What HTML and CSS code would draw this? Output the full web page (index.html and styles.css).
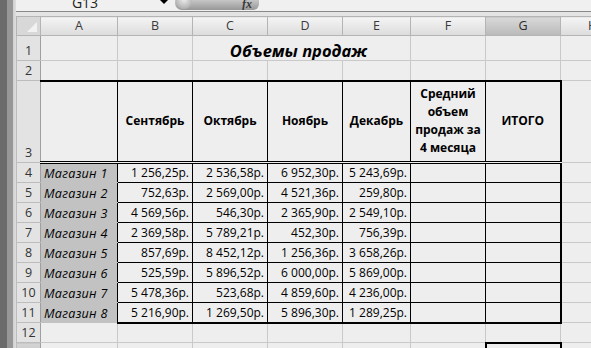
FILE: index.html
```html
<!DOCTYPE html>
<html lang="ru">
<head>
<meta charset="utf-8">
<title>Объемы продаж</title>
<link rel="stylesheet" href="styles.css">
</head>
<body>
<div class="app">
  <div class="sidebar"></div>
  <div class="main">
    <div class="formula-bar">
      <div class="name-box"><span class="name-text">G13</span></div>
      <div class="dropdown"></div>
      <div class="fx-pill"><span class="fx-knob"></span><span class="fx">fx</span></div>
      <div class="formula-input"></div>
    </div>
    <div class="sheet-wrap">
      <table class="sheet">
        <colgroup>
          <col class="w-hdr"><col class="w-a"><col class="w-b"><col class="w-c"><col class="w-d"><col class="w-e"><col class="w-f"><col class="w-g"><col class="w-h">
        </colgroup>
        <thead>
          <tr class="h-col">
            <th class="corner"><span class="corner-tri"></span></th>
            <th class="colh">A</th><th class="colh">B</th><th class="colh">C</th><th class="colh">D</th><th class="colh">E</th><th class="colh">F</th><th class="colh sel">G</th><th class="colh">H</th>
          </tr>
        </thead>
        <tbody>
          <tr class="h-r1">
            <th class="rowh">1</th><td></td><td></td><td colspan="3" class="title">Объемы продаж</td><td></td><td></td><td></td>
          </tr>
          <tr class="h-20">
            <th class="rowh">2</th><td></td><td></td><td></td><td></td><td></td><td></td><td></td><td></td>
          </tr>
          <tr class="h-r3">
            <th class="rowh">3</th>
            <td class="hd hd-a"></td>
            <td class="hd">Сентябрь</td>
            <td class="hd">Октябрь</td>
            <td class="hd">Ноябрь</td>
            <td class="hd">Декабрь</td>
            <td class="hd wrap">Средний объем продаж за 4 месяца</td>
            <td class="hd last">ИТОГО</td>
            <td></td>
          </tr>
          <tr class="h-20"><th class="rowh">4</th><td class="shop">Магазин 1</td><td class="num">1 256,25р.</td><td class="num">2 536,58р.</td><td class="num">6 952,30р.</td><td class="num">5 243,69р.</td><td class="num"></td><td class="num last"></td><td></td></tr>
          <tr class="h-20"><th class="rowh">5</th><td class="shop">Магазин 2</td><td class="num">752,63р.</td><td class="num">2 569,00р.</td><td class="num">4 521,36р.</td><td class="num">259,80р.</td><td class="num"></td><td class="num last"></td><td></td></tr>
          <tr class="h-20"><th class="rowh">6</th><td class="shop">Магазин 3</td><td class="num">4 569,56р.</td><td class="num">546,30р.</td><td class="num">2 365,90р.</td><td class="num">2 549,10р.</td><td class="num"></td><td class="num last"></td><td></td></tr>
          <tr class="h-20"><th class="rowh">7</th><td class="shop">Магазин 4</td><td class="num">2 369,58р.</td><td class="num">5 789,21р.</td><td class="num">452,30р.</td><td class="num">756,39р.</td><td class="num"></td><td class="num last"></td><td></td></tr>
          <tr class="h-20"><th class="rowh">8</th><td class="shop">Магазин 5</td><td class="num">857,69р.</td><td class="num">8 452,12р.</td><td class="num">1 256,36р.</td><td class="num">3 658,26р.</td><td class="num"></td><td class="num last"></td><td></td></tr>
          <tr class="h-20"><th class="rowh">9</th><td class="shop">Магазин 6</td><td class="num">525,59р.</td><td class="num">5 896,52р.</td><td class="num">6 000,00р.</td><td class="num">5 869,00р.</td><td class="num"></td><td class="num last"></td><td></td></tr>
          <tr class="h-20"><th class="rowh">10</th><td class="shop">Магазин 7</td><td class="num">5 478,36р.</td><td class="num">523,68р.</td><td class="num">4 859,60р.</td><td class="num">4 236,00р.</td><td class="num"></td><td class="num last"></td><td></td></tr>
          <tr class="h-20 end"><th class="rowh">11</th><td class="shop">Магазин 8</td><td class="num">5 216,90р.</td><td class="num">1 269,50р.</td><td class="num">5 896,30р.</td><td class="num">1 289,25р.</td><td class="num"></td><td class="num last"></td><td></td></tr>
          <tr class="h-20"><th class="rowh">12</th><td></td><td></td><td></td><td></td><td></td><td></td><td></td><td></td></tr>
          <tr class="h-20"><th class="rowh sel">13</th><td></td><td></td><td></td><td></td><td></td><td></td><td class="active"></td><td></td></tr>
        </tbody>
      </table>
    </div>
  </div>
</div>
</body>
</html>
```

FILE: styles.css
```css
html, body {
  margin: 0;
  padding: 0;
  width: 591px;
  height: 348px;
  overflow: hidden;
  background: #eeeeee;
  font-family: "Open Sans", "Noto Sans", sans-serif;
  color: #000;
}

.app {
  display: flex;
  width: 591px;
  height: 348px;
  overflow: hidden;
}

.sidebar {
  flex: 0 0 16px;
  background: linear-gradient(to right, #6b6b6b 0, #6b6b6b 7px, #979797 7px, #979797 13px, #cfcfcf 13px, #dedede 16px);
}

.main {
  flex: 1 1 auto;
  min-width: 0;
  overflow: hidden;
  background: #e4e4e4;
}

/* formula bar */
.formula-bar {
  display: flex;
  height: 11px;
  border-bottom: 1px solid #8a8a8a;
  background: #f0f0f0;
  overflow: hidden;
  margin-bottom: 4px;
}

.name-box {
  flex: 0 0 138px;
  text-align: center;
  font-size: 14px;
  line-height: 14px;
  color: #222;
}

.name-text {
  display: block;
  margin-top: -4px;
}

.dropdown {
  flex: 0 0 auto;
  margin-left: 6px;
  width: 0;
  height: 0;
  border-top: 4px solid #000;
  border-left: 4px solid transparent;
  border-right: 4px solid transparent;
}

.fx-pill {
  flex: 0 0 84px;
  margin-left: 7px;
  height: 10px;
  border-radius: 0 0 6px 7px;
  background: linear-gradient(to bottom, #c6c6c6, #979797);
  display: flex;
  align-items: flex-start;
  justify-content: space-between;
  overflow: hidden;
}

.fx-knob {
  width: 16px;
  height: 16px;
  margin-top: -7px;
  margin-left: 1px;
  border-radius: 50%;
  background: radial-gradient(circle at 50% 40%, #eeeeee, #b4b4b4 70%);
}

.fx {
  font-family: "Liberation Serif", serif;
  font-style: italic;
  font-weight: bold;
  font-size: 12px;
  line-height: 12px;
  margin-top: -2px;
  margin-right: 7px;
  color: #3a3a3a;
}

.formula-input {
  flex: 1 1 auto;
}

/* sheet */
.sheet-wrap {
  overflow: hidden;
}

.sheet {
  border-collapse: collapse;
  table-layout: fixed;
  width: 608px;
  font-size: 12px;
  background: #eeeeee;
}

.w-hdr { width: 24px; }
.w-a { width: 77px; }
.w-b { width: 75px; }
.w-c { width: 75px; }
.w-d { width: 75px; }
.w-e { width: 68px; }
.w-f { width: 75px; }
.w-g { width: 75px; }
.w-h { width: 64px; }

.sheet td,
.sheet th {
  border: 1px solid #c9c9c9;
  padding: 0 3px;
  white-space: nowrap;
  overflow: hidden;
  vertical-align: bottom;
  line-height: 16px;
}

.h-col { height: 19px; }
.h-r1 { height: 25px; }
.h-20 { height: 20px; }
.h-r3 { height: 82px; }

.colh {
  font-weight: normal;
  color: #3a3a3a;
  text-align: center;
  vertical-align: middle !important;
  background: linear-gradient(to bottom, #f4f4f4, #dcdcdc);
  border-color: #b4b4b4 !important;
  font-size: 12.5px;
}

.colh.sel {
  background: linear-gradient(to bottom, #d9d9d9, #b9b9b9);
  color: #2a2a2a;
}

.corner {
  position: relative;
  background: #d8d8d8;
  border-color: #b4b4b4 !important;
  padding: 0 !important;
}

.corner-tri {
  position: absolute;
  right: 3px;
  bottom: 3px;
  width: 0;
  height: 0;
  border-left: 10px solid transparent;
  border-bottom: 10px solid #f2f2f2;
}

.rowh {
  font-weight: normal;
  color: #333;
  text-align: center;
  background: #e3e3e3;
  border-color: #bdbdbd !important;
  border-right-color: #9f9f9f !important;
  padding: 0 0 1px 0 !important;
  font-size: 12.5px;
}

.rowh.sel {
  background: linear-gradient(to bottom, #d4d4d4, #bdbdbd);
}

.title {
  text-align: center;
  font-weight: bold;
  font-style: italic;
  font-size: 16.5px;
  padding: 0 6px 1px 0 !important;
  line-height: 20px;
}

/* data table */
.hd {
  font-weight: bold;
  text-align: center;
  vertical-align: middle !important;
  border: 1px solid #000 !important;
  border-top: 2px solid #000 !important;
  border-bottom: 3px double #000 !important;
}

.hd.hd-a {
  border-left: 1px solid #9f9f9f !important;
}

.hd.wrap {
  white-space: normal;
  line-height: 18px;
  padding: 0 2px;
}

.hd.last {
  border-right: 2px solid #000 !important;
}

.shop {
  font-style: italic;
  font-size: 12.6px;
  background: #c2c2c2;
  border-top: 1px solid #c2c2c2 !important;
  border-bottom: 1px solid #c2c2c2 !important;
  border-right: 1px solid #000 !important;
  padding-left: 3px !important;
  letter-spacing: 0.3px;
}

.num {
  text-align: right;
  border: 1px solid #000 !important;
  padding: 0 3px 1px 0 !important;
}

.num.last {
  border-right: 2px solid #000 !important;
}

.end .num {
  border-bottom: 2px solid #000 !important;
}

.active {
  border: 2px solid #000 !important;
}
```
